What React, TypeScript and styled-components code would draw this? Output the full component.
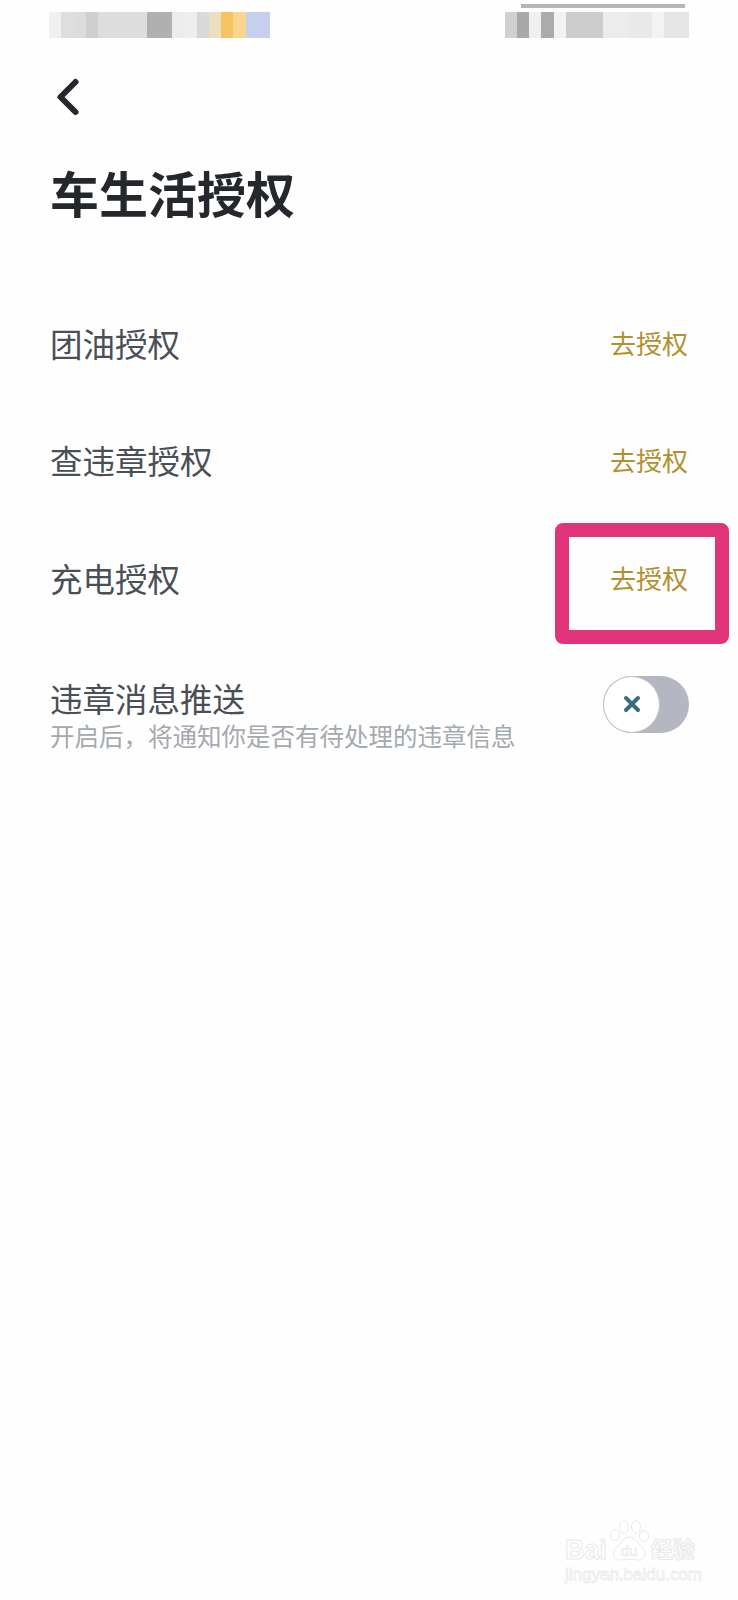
import React from 'react';
import styled, { createGlobalStyle } from 'styled-components';

const GlobalStyle = createGlobalStyle`
  html, body {
    margin: 0;
    padding: 0;
    background: #fefefe;
  }
`;

const Page = styled.div`
  position: relative;
  width: 738px;
  height: 1600px;
  overflow: hidden;
  background: #fefefe;
  font-family: "Noto Sans CJK SC", "Noto Sans", sans-serif;
`;

const StatusBar = styled.div`
  display: flex;
  justify-content: space-between;
  align-items: flex-start;
  height: 38px;
  padding: 12px 49px 0 49px;
`;

const Mosaic = styled.div`
  display: flex;
  height: 26px;
  filter: blur(0.4px);
`;

const Tile = styled.span<{ $width: number; $color: string }>`
  width: ${({ $width }) => $width * 12.3}px;
  background: ${({ $color }) => $color};
`;

const TopLine = styled.div`
  position: absolute;
  top: 4px;
  left: 521px;
  width: 164px;
  height: 4px;
  background: #b7b7b7;
`;

const BackButton = styled.button`
  display: block;
  width: 40px;
  height: 44px;
  margin: 25px 0 0 49px;
  padding: 0;
  border: 0;
  background: none;
`;

const Title = styled.h1`
  margin: 37px 0 0 50px;
  font-size: 49px;
  line-height: 72px;
  font-weight: 700;
  color: #24272c;
`;

const List = styled.div`
  display: flex;
  flex-direction: column;
  margin-top: 56px;
  padding: 0 50px;
`;

const Row = styled.div`
  display: flex;
  justify-content: space-between;
  align-items: center;
  height: 117.5px;
`;

const RowLabel = styled.span`
  font-size: 32.5px;
  line-height: 44px;
  color: #4a4f57;
`;

const RowAction = styled.span`
  font-size: 26px;
  line-height: 36px;
  color: #b3902f;
`;

const SwitchRow = styled.div`
  display: flex;
  justify-content: space-between;
  align-items: flex-start;
  margin-top: 39px;
`;

const SwitchText = styled.div`
  display: flex;
  flex-direction: column;
`;

const SwitchHint = styled.span`
  font-size: 24.5px;
  line-height: 32px;
  color: #a5a9b0;
`;

const Track = styled.div`
  display: flex;
  align-items: center;
  width: 86px;
  height: 57px;
  margin-right: -1px;
  border-radius: 29px;
  background: #b4b6c1;
`;

const Knob = styled.div`
  display: flex;
  align-items: center;
  justify-content: center;
  box-sizing: border-box;
  width: 57px;
  height: 57px;
  border: 1.5px solid #c4c6cc;
  border-radius: 50%;
  background: #ffffff;
`;

const Highlight = styled.div`
  position: absolute;
  top: 523px;
  left: 555px;
  box-sizing: border-box;
  width: 174px;
  height: 121px;
  border: 14px solid #e0357a;
  border-radius: 8px;
`;

const Watermark = styled.div`
  position: absolute;
  top: 1518px;
  left: 565px;
  display: flex;
  flex-direction: column;
  width: 134px;
`;

const WatermarkLogo = styled.div`
  display: flex;
  align-items: flex-end;
  height: 44px;
`;

const WatermarkWord = styled.span<{ $size: number }>`
  font-family: "Liberation Sans", "Noto Sans CJK SC", sans-serif;
  font-size: ${({ $size }) => $size}px;
  line-height: 24px;
  font-weight: 700;
  color: #ffffff;
  -webkit-text-stroke: 1px #e9e9e9;
`;

const WatermarkUrl = styled.span`
  margin-top: 3px;
  font-family: "Liberation Sans", sans-serif;
  font-size: 17px;
  line-height: 20px;
  color: #ffffff;
  -webkit-text-stroke: 0.8px #ebebeb;
  white-space: nowrap;
`;

const leftTiles: [number, string][] = [
  [1, '#f0f0f0'], [1, '#dedede'], [1, '#dcdcdc'], [1, '#cfcfcf'], [4, '#dddddd'], [2, '#b0b0b0'],
  [1, '#ececec'], [1, '#eeeeee'], [1, '#d9d9d9'], [1, '#ecdfc0'], [1, '#f5c460'],
  [1, '#f8d68f'], [2, '#c6cfee'],
];

const rightTiles: [number, string][] = [
  [1, '#d0d0d0'], [1, '#a9a9a9'], [1, '#f0f0f0'], [1, '#ababab'], [1, '#f2f2f2'],
  [3, '#cdcdcd'], [2, '#ececec'], [2, '#e9e9e9'], [1, '#f3f3f3'], [2, '#e6e6e6'],
];

const rows = ['团油授权', '查违章授权', '充电授权'];

const App: React.FC = () => (
  <Page>
    <GlobalStyle />
    <StatusBar>
      <Mosaic>
        {leftTiles.map(([w, c], i) => <Tile key={i} $width={w} $color={c} />)}
      </Mosaic>
      <Mosaic>
        {rightTiles.map(([w, c], i) => <Tile key={i} $width={w} $color={c} />)}
      </Mosaic>
    </StatusBar>
    <TopLine />

    <BackButton aria-label="back">
      <svg width="40" height="44" viewBox="0 0 40 44" fill="none">
        <path d="M26.5 7 L11.5 22 L26.5 37" stroke="#24272c" strokeWidth="6" strokeLinecap="round" strokeLinejoin="round" />
      </svg>
    </BackButton>

    <Title>车生活授权</Title>

    <List>
      {rows.map((label) => (
        <Row key={label}>
          <RowLabel>{label}</RowLabel>
          <RowAction>去授权</RowAction>
        </Row>
      ))}
      <SwitchRow>
        <SwitchText>
          <RowLabel>违章消息推送</RowLabel>
          <SwitchHint>开启后，将通知你是否有待处理的违章信息</SwitchHint>
        </SwitchText>
        <Track>
          <Knob>
            <svg width="18" height="18" viewBox="0 0 18 18">
              <path d="M3 3 L15 15 M15 3 L3 15" stroke="#3b6e80" strokeWidth="4" strokeLinecap="round" />
            </svg>
          </Knob>
        </Track>
      </SwitchRow>
    </List>

    <Highlight />

    <Watermark>
      <WatermarkLogo>
        <WatermarkWord $size={27}>Bai</WatermarkWord>
        <svg width="44" height="42" viewBox="0 0 44 42" fill="#ffffff" stroke="#e9e9e9" strokeWidth="1">
          <ellipse cx="8" cy="15" rx="4.5" ry="5.5" />
          <ellipse cx="17" cy="7" rx="4.5" ry="6" />
          <ellipse cx="29" cy="7" rx="4.5" ry="6" />
          <ellipse cx="37" cy="16" rx="4.5" ry="5.5" />
          <path d="M22 17 C28 17 31 24 36 28 C41 33 37 41 30 40 C26 39 19 39 15 40 C8 41 4 34 9 28 C14 24 16 17 22 17 Z" />
          <text x="22" y="36" fontSize="15" fontFamily="Liberation Sans, sans-serif" textAnchor="middle" strokeWidth="0.7">du</text>
        </svg>
        <WatermarkWord $size={22}>经验</WatermarkWord>
      </WatermarkLogo>
      <WatermarkUrl>jingyan.baidu.com</WatermarkUrl>
    </Watermark>
  </Page>
);

export default App;
